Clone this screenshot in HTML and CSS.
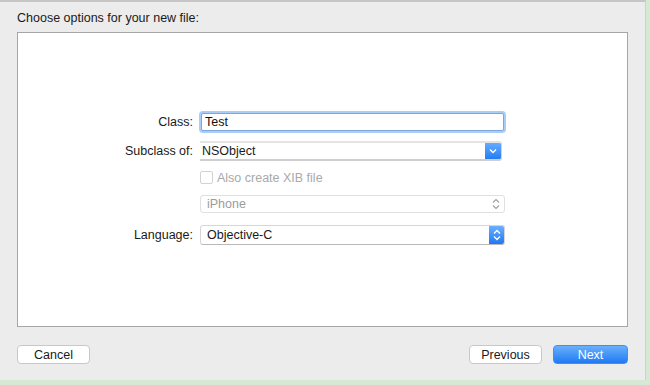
FILE: index.html
```html
<!DOCTYPE html>
<html lang="en">
<head>
    <meta charset="UTF-8">
    <meta name="viewport" content="width=device-width, initial-scale=1.0">
    <title>New File</title>
    <link rel="stylesheet" href="styles.css">
</head>
<body>
    <div class="sheet">
        <div class="title">Choose options for your new file:</div>
        <div class="panel">
            <div class="form">
                <div class="row row-class">
                    <label class="label">Class:</label>
                    <input class="field" type="text" value="Test">
                </div>
                <div class="row row-subclass">
                    <label class="label">Subclass of:</label>
                    <div class="popup combo">
                        <span class="popup-text">NSObject</span>
                        <span class="arrow">
                            <svg width="8" height="6" viewBox="0 0 8 6"><path d="M1 1.5 L4 4.5 L7 1.5" fill="none" stroke="#fff" stroke-width="1.4"/></svg>
                        </span>
                    </div>
                </div>
                <div class="row row-check">
                    <span class="label"></span>
                    <div class="check">
                        <span class="box"></span>
                        <span class="check-text">Also create XIB file</span>
                    </div>
                </div>
                <div class="row row-device">
                    <span class="label"></span>
                    <div class="popup disabled">
                        <span class="popup-text">iPhone</span>
                        <span class="stepper">
                            <svg width="8" height="12" viewBox="0 0 8 12"><path d="M1 4.5 L4 1.5 L7 4.5 M1 7.5 L4 10.5 L7 7.5" fill="none" stroke="#a0a0a0" stroke-width="1.2"/></svg>
                        </span>
                    </div>
                </div>
                <div class="row row-lang">
                    <label class="label">Language:</label>
                    <div class="popup">
                        <span class="popup-text">Objective-C</span>
                        <span class="stepper blue">
                            <svg width="8" height="12" viewBox="0 0 8 12"><path d="M1 4.5 L4 1.5 L7 4.5 M1 7.5 L4 10.5 L7 7.5" fill="none" stroke="#fff" stroke-width="1.3"/></svg>
                        </span>
                    </div>
                </div>
            </div>
        </div>
        <div class="footer">
            <button class="btn">Cancel</button>
            <div class="spacer"></div>
            <button class="btn">Previous</button>
            <button class="btn primary">Next</button>
        </div>
    </div>
</body>
</html>
```

FILE: styles.css
```css
body {
    margin: 0;
    background-color: #d6ead3;
    font-family: "Liberation Sans", Arial, sans-serif;
    font-size: 12.5px;
    color: #1a1a1a;
}
.sheet {
    width: 645px;
    height: 378px;
    background-color: #ececec;
    border-top: 2px solid #c6c6c6;
    border-right: 1px solid #d0d0d0;
    display: flex;
    flex-direction: column;
}
.title {
    padding: 8px 0 0 17px;
    height: 22px;
    line-height: 16px;
}
.panel {
    margin-left: 17px;
    width: 609px;
    height: 293px;
    background-color: #fff;
    border: 1px solid #a6a6a6;
}
.form {
    padding-top: 78px;
    display: flex;
    flex-direction: column;
}
.row {
    display: flex;
    align-items: center;
    gap: 6px;
}
.label {
    width: 175px;
    text-align: right;
    flex-shrink: 0;
}
.row-class {
    height: 22px;
    margin-bottom: 8px;
}
.row-subclass {
    height: 20px;
    margin-bottom: 10px;
}
.row-check {
    height: 13px;
    margin-bottom: 11px;
}
.row-device {
    height: 18px;
    margin-bottom: 12px;
}
.row-lang {
    height: 20px;
}
.field {
    margin-left: 2px;
    width: 303px;
    height: 18px;
    box-sizing: border-box;
    border: 1px solid #7da7dc;
    border-radius: 2px;
    box-shadow: 0 0 0 2px #a8cdf8;
    padding: 0 3px;
    font-family: inherit;
    font-size: 12.5px;
    color: #111;
    outline: none;
}
.popup {
    margin-left: 1px;
    width: 305px;
    height: 20px;
    box-sizing: border-box;
    background-color: #fff;
    border: 1px solid #d6d6d6;
    border-bottom-color: #b8b8b8;
    border-radius: 3px;
    display: flex;
    align-items: center;
    overflow: hidden;
}
.popup-text {
    flex: 1;
    padding-left: 6px;
}
.combo {
    width: 302px;
    border-top: 2px solid #e4e4e4;
    border-left: none;
    border-bottom: 2px solid #cfcfcf;
    border-radius: 0 3px 3px 0;
}
.combo .popup-text {
    padding-left: 2px;
}
.arrow {
    width: 16px;
    height: 20px;
    margin: -2px 0;
    background: linear-gradient(#6db2ff, #1c76f2);
    border-radius: 0 3px 3px 0;
    display: flex;
    align-items: center;
    justify-content: center;
}
.disabled {
    height: 18px;
    border-color: #e0e0e0;
}
.disabled .popup-text {
    color: #9c9c9c;
}
.stepper {
    width: 16px;
    height: 100%;
    display: flex;
    align-items: center;
    justify-content: center;
}
.stepper.blue {
    height: 20px;
    margin: -1px;
    background: linear-gradient(#6db2ff, #1c76f2);
    border-radius: 0 3px 3px 0;
}
.check {
    margin-left: 1px;
    display: flex;
    align-items: center;
    gap: 4px;
}
.box {
    width: 11px;
    height: 11px;
    border: 1px solid #d2d2d2;
    border-radius: 2px;
    background-color: #fff;
}
.check-text {
    color: #a9a9a9;
}
.footer {
    display: flex;
    align-items: center;
    gap: 11px;
    padding: 0 0 0 17px;
    margin-top: 18px;
}
.spacer {
    flex: 1;
}
.btn {
    height: 19px;
    width: 73px;
    padding: 0;
    background-color: #fff;
    border: 1px solid #c8c8c8;
    border-radius: 4px;
    font-family: inherit;
    font-size: 12.5px;
    color: #1a1a1a;
}
.btn:last-child {
    margin-right: 17px;
}
.primary {
    width: 75px;
    color: #fff;
    border-color: #3f8ef5;
    background: linear-gradient(#69b0fd, #1f7af3);
}
```
